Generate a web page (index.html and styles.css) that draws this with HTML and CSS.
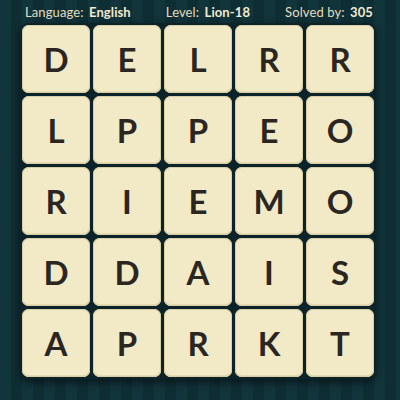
FILE: index.html
```html
<!DOCTYPE html>
<html>
<head>
<meta charset="utf-8">
<link rel="stylesheet" href="styles.css">
</head>
<body>
<div class="page">
  <div class="header">
    <span class="item">Language: <b>English</b></span>
    <span class="item">Level: <b>Lion-18</b></span>
    <span class="item">Solved by: <b>305</b></span>
  </div>
  <div class="board">
    <div class="tile">D</div><div class="tile">E</div><div class="tile">L</div><div class="tile">R</div><div class="tile">R</div>
    <div class="tile">L</div><div class="tile">P</div><div class="tile">P</div><div class="tile">E</div><div class="tile">O</div>
    <div class="tile">R</div><div class="tile">I</div><div class="tile">E</div><div class="tile">M</div><div class="tile">O</div>
    <div class="tile">D</div><div class="tile">D</div><div class="tile">A</div><div class="tile">I</div><div class="tile">S</div>
    <div class="tile">A</div><div class="tile">P</div><div class="tile">R</div><div class="tile">K</div><div class="tile">T</div>
  </div>
</div>
</body>
</html>
```
FILE: styles.css
```css
html, body {
  margin: 0;
  padding: 0;
}
body {
  width: 400px;
  height: 400px;
  overflow: hidden;
  background-color: #12333a;
  background-image: repeating-linear-gradient(90deg, #12343b 0px, #12343b 11px, #0f2e34 11px, #0f2e34 22px);
  font-family: "Lato", "Open Sans", sans-serif;
}
.page {
  display: flex;
  flex-direction: column;
  padding-left: 20px;
}
.header {
  height: 23px;
  width: 356px;
  display: flex;
  justify-content: space-between;
  align-items: center;
  padding: 0 3px 0 5px;
  box-sizing: border-box;
  color: #e3dcbd;
  font-size: 13px;
  letter-spacing: 0.1px;
}
.header b {
  font-weight: 700;
  color: #f1ead0;
  margin-left: 2px;
}
.board {
  width: 356px;
  box-sizing: border-box;
  padding: 2px;
  background: #0c2429;
  border-radius: 9px;
  box-shadow: 0 3px 8px rgba(0, 0, 0, 0.55);
  display: grid;
  grid-template-columns: repeat(5, 68px);
  grid-auto-rows: 68px;
  gap: 3px;
}
.tile {
  background: #f2eac6;
  border-radius: 7px;
  box-shadow: inset 0 0 0 1px #d8cea4, inset 0 -2px 0 #e6dcb4;
  display: flex;
  align-items: center;
  justify-content: center;
  color: #2b2622;
  font-size: 33px;
  font-weight: 700;
}
```
